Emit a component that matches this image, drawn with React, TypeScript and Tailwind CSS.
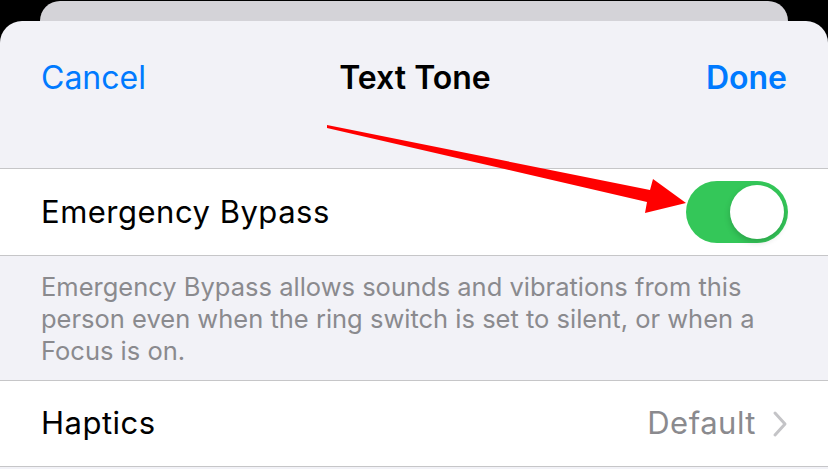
export default function App() {
  return (
    <div
      className="w-[828px] h-[469px] bg-black relative overflow-hidden"
      style={{ fontFamily: 'Inter, "Liberation Sans", sans-serif' }}
    >
      {/* card behind the sheet */}
      <div className="absolute left-[40px] right-[40px] top-[1px] h-[40px] rounded-t-[20px] bg-[#d4d3d8]" />

      {/* sheet */}
      <div className="absolute left-0 right-0 top-[21px] bottom-0 rounded-t-[22px] bg-[#f2f2f7] flex flex-col">
        {/* nav bar */}
        <div className="h-[114px] grid grid-cols-[1fr_auto_1fr] items-start pt-[35px] px-[41px]">
          <span className="text-[32px] leading-[44px] text-[#007aff]">Cancel</span>
          <span className="text-center text-[32px] leading-[44px] font-semibold text-black pl-[2px]">Text Tone</span>
          <span className="text-right text-[32px] leading-[44px] font-semibold text-[#007aff]">Done</span>
        </div>

        <div className="h-[33px]" />

        {/* toggle row */}
        <div className="border-y border-[#c6c6c8] bg-white h-[88px] flex items-center pl-[41px] pr-[40px]">
          <span className="flex-1 text-[31px] tracking-[0.5px] text-black">Emergency Bypass</span>
          <div className="w-[102px] h-[62px] rounded-full bg-[#34c759] flex items-center justify-end pr-[4px]">
            <div className="w-[54px] h-[54px] rounded-full bg-white shadow-[0_3px_6px_rgba(0,0,0,0.18)]" />
          </div>
        </div>

        {/* footer */}
        <div className="h-[124px] pl-[41px] pt-[15px] text-[25.5px] leading-[32px] text-[#8a8a8e]">
          Emergency Bypass allows sounds and vibrations from this
          <br />
          person even when the ring switch is set to silent, or when a
          <br />
          Focus is on.
        </div>

        {/* haptics row */}
        <div className="border-y border-[#c6c6c8] bg-white h-[87px] flex items-center pl-[41px] pr-[40px]">
          <span className="flex-1 text-[31px] tracking-[0.5px] text-black">Haptics</span>
          <span className="text-[31px] tracking-[0.5px] text-[#8a8a8e]">Default</span>
          <svg width="16" height="28" viewBox="0 0 16 28" className="ml-[16px]">
            <path d="M3 3 L13 14 L3 25" fill="none" stroke="#c4c4c7" strokeWidth="3" strokeLinecap="round" strokeLinejoin="round" />
          </svg>
        </div>
      </div>

      {/* red annotation arrow */}
      <svg className="absolute left-0 top-0" width="828" height="469" viewBox="0 0 828 469">
        <polygon
          points="327,125 650,190 653,179 686,203 645,213 647,202 327,128"
          fill="#ff0000"
        />
      </svg>
    </div>
  );
}
